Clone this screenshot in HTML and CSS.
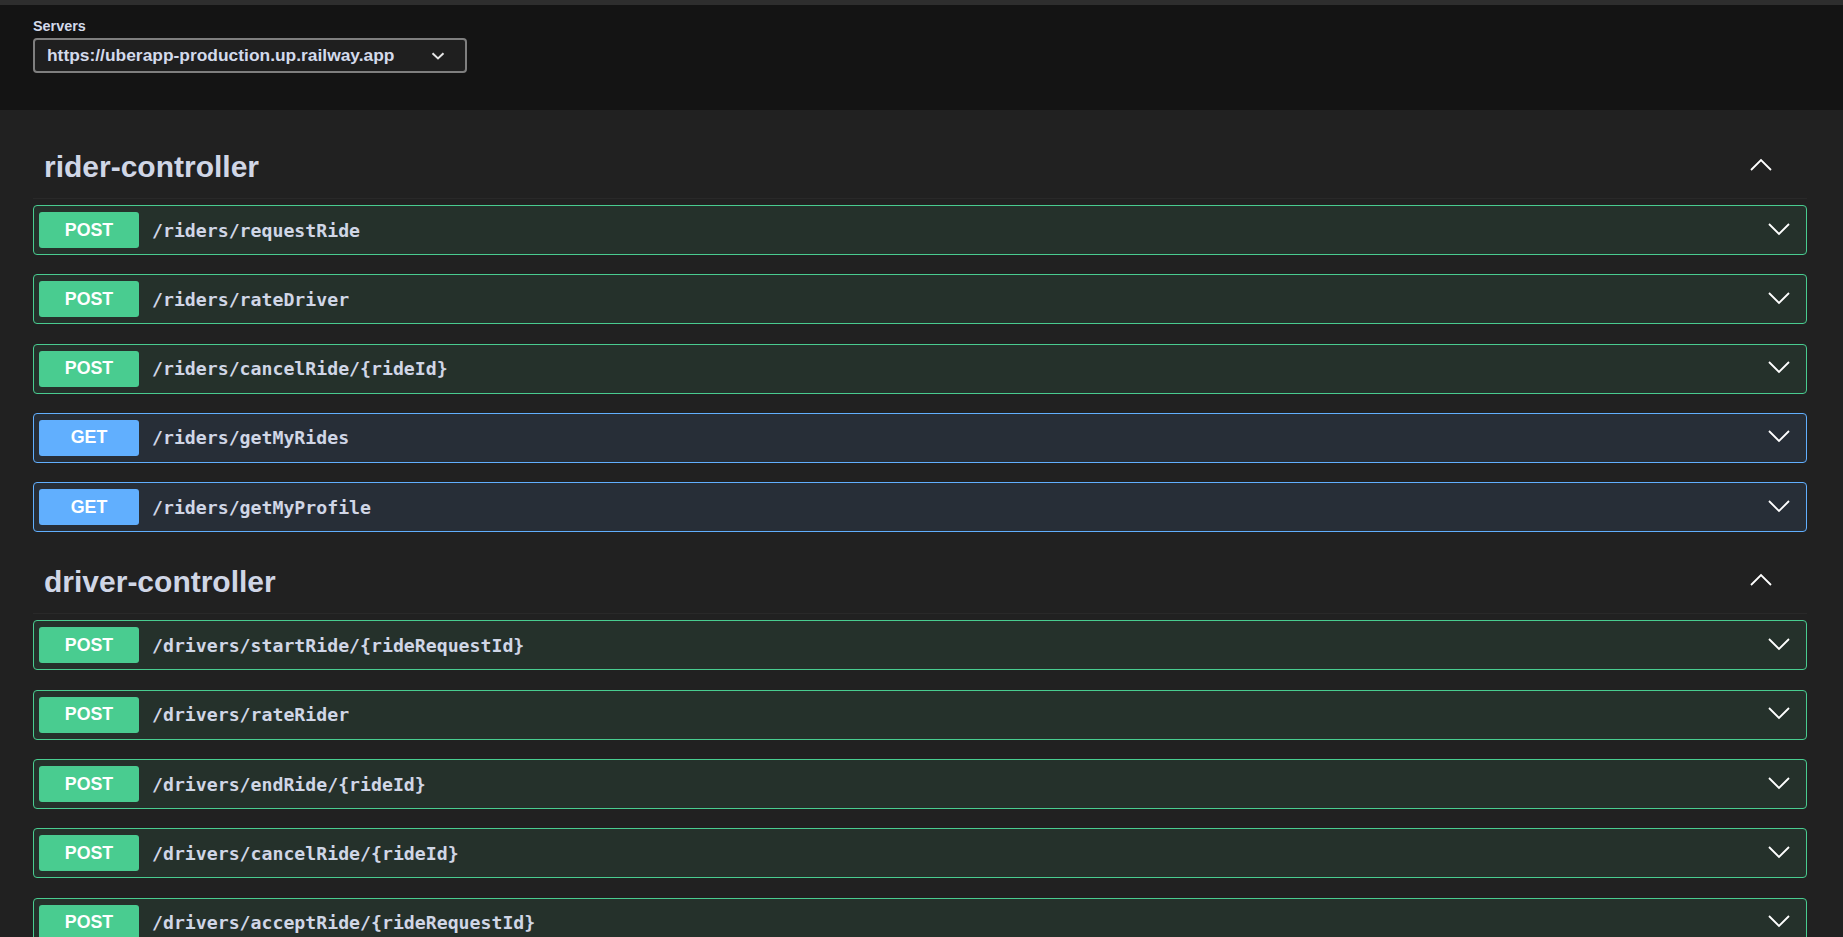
FILE: index.html
```html
<!DOCTYPE html>
<html lang="en">
<head>
<meta charset="utf-8">
<title>Swagger UI</title>
<link rel="stylesheet" href="styles.css">
</head>
<body>
<div class="topbar"></div>
<div class="scheme">
  <div class="servers">
    <label class="servers-label">Servers</label>
    <div class="select">
      <span class="select-text">https://uberapp-production.up.railway.app</span>
      <svg class="select-arrow" width="14" height="8" viewBox="0 0 14 8"><polyline points="1.5,1.2 7,6.4 12.5,1.2" fill="none" stroke="#e6e6e6" stroke-width="2"/></svg>
    </div>
  </div>
</div>
<main class="main">
  <section class="tag-section">
    <div class="tag-header">
      <h3 class="tag-title">rider-controller</h3>
      <svg class="tag-arrow" width="22" height="13" viewBox="0 0 22 13"><polyline points="1,12 11,2 21,12" fill="none" stroke="#ffffff" stroke-width="1.8"/></svg>
    </div>
    <div class="op post"><span class="method">POST</span><span class="path">/riders/requestRide</span><svg class="op-arrow" width="22" height="13" viewBox="0 0 22 13"><polyline points="1,1 11,11 21,1" fill="none" stroke="#ffffff" stroke-width="1.8"/></svg></div>
    <div class="op post"><span class="method">POST</span><span class="path">/riders/rateDriver</span><svg class="op-arrow" width="22" height="13" viewBox="0 0 22 13"><polyline points="1,1 11,11 21,1" fill="none" stroke="#ffffff" stroke-width="1.8"/></svg></div>
    <div class="op post"><span class="method">POST</span><span class="path">/riders/cancelRide/{rideId}</span><svg class="op-arrow" width="22" height="13" viewBox="0 0 22 13"><polyline points="1,1 11,11 21,1" fill="none" stroke="#ffffff" stroke-width="1.8"/></svg></div>
    <div class="op get"><span class="method">GET</span><span class="path">/riders/getMyRides</span><svg class="op-arrow" width="22" height="13" viewBox="0 0 22 13"><polyline points="1,1 11,11 21,1" fill="none" stroke="#ffffff" stroke-width="1.8"/></svg></div>
    <div class="op get"><span class="method">GET</span><span class="path">/riders/getMyProfile</span><svg class="op-arrow" width="22" height="13" viewBox="0 0 22 13"><polyline points="1,1 11,11 21,1" fill="none" stroke="#ffffff" stroke-width="1.8"/></svg></div>
  </section>
  <section class="tag-section">
    <div class="tag-header">
      <h3 class="tag-title">driver-controller</h3>
      <svg class="tag-arrow" width="22" height="13" viewBox="0 0 22 13"><polyline points="1,12 11,2 21,12" fill="none" stroke="#ffffff" stroke-width="1.8"/></svg>
    </div>
    <div class="op post"><span class="method">POST</span><span class="path">/drivers/startRide/{rideRequestId}</span><svg class="op-arrow" width="22" height="13" viewBox="0 0 22 13"><polyline points="1,1 11,11 21,1" fill="none" stroke="#ffffff" stroke-width="1.8"/></svg></div>
    <div class="op post"><span class="method">POST</span><span class="path">/drivers/rateRider</span><svg class="op-arrow" width="22" height="13" viewBox="0 0 22 13"><polyline points="1,1 11,11 21,1" fill="none" stroke="#ffffff" stroke-width="1.8"/></svg></div>
    <div class="op post"><span class="method">POST</span><span class="path">/drivers/endRide/{rideId}</span><svg class="op-arrow" width="22" height="13" viewBox="0 0 22 13"><polyline points="1,1 11,11 21,1" fill="none" stroke="#ffffff" stroke-width="1.8"/></svg></div>
    <div class="op post"><span class="method">POST</span><span class="path">/drivers/cancelRide/{rideId}</span><svg class="op-arrow" width="22" height="13" viewBox="0 0 22 13"><polyline points="1,1 11,11 21,1" fill="none" stroke="#ffffff" stroke-width="1.8"/></svg></div>
    <div class="op post"><span class="method">POST</span><span class="path">/drivers/acceptRide/{rideRequestId}</span><svg class="op-arrow" width="22" height="13" viewBox="0 0 22 13"><polyline points="1,1 11,11 21,1" fill="none" stroke="#ffffff" stroke-width="1.8"/></svg></div>
  </section>
</main>
</body>
</html>
```
FILE: styles.css
```css
html, body {
  margin: 0;
  padding: 0;
  overflow: hidden;
}
body {
  background: #212121;
  font-family: "Liberation Sans", Arial, sans-serif;
  color: #d0d6e6;
}
.topbar {
  height: 5px;
  background: #2e2e2e;
}
.scheme {
  height: 105px;
  background: #141414;
  box-sizing: border-box;
  padding: 12px 0 0 33px;
}
.servers {
  display: flex;
  flex-direction: column;
  align-items: flex-start;
}
.servers-label {
  font-size: 14.4px;
  font-weight: 700;
  line-height: 18px;
  color: #d3daeb;
  margin-bottom: 3px;
}
.select {
  box-sizing: border-box;
  width: 434px;
  height: 35px;
  border: 2px solid #7f7f7f;
  border-radius: 4px;
  background: #1f1f1f;
  display: flex;
  align-items: center;
  padding: 0 20px 0 12px;
}
.select-text {
  flex: 1;
  font-size: 17.4px;
  font-weight: 700;
  color: #d3daeb;
  white-space: nowrap;
}
.select-arrow {
  display: block;
}
.main {
  padding: 26px 36px 0 33px;
}
.tag-header {
  height: 62px;
  border-bottom: 1px solid #292929;
  margin-bottom: 6px;
  display: flex;
  align-items: center;
  padding: 0 35px 0 11px;
}
.tag-title {
  flex: 1;
  margin: 0;
  font-size: 30px;
  font-weight: 700;
  color: #d0d6e6;
  line-height: 36px;
}
.tag-arrow {
  display: block;
  margin-bottom: 5px;
}
.op {
  box-sizing: border-box;
  height: 50px;
  margin-bottom: 19.3px;
  border: 1px solid;
  border-radius: 4px;
  display: flex;
  align-items: center;
  padding: 0 16px 0 5px;
}
.op.post {
  border-color: #49cc90;
  background: #25312b;
}
.op.get {
  border-color: #61affe;
  background: #272e37;
}
.method {
  width: 100px;
  height: 36px;
  border-radius: 3px;
  display: flex;
  align-items: center;
  justify-content: center;
  color: #ffffff;
  font-size: 17.8px;
  font-weight: 700;
  box-sizing: border-box;
}
.post .method {
  background: #49cc90;
}
.get .method {
  background: #61affe;
}
.path {
  flex: 1;
  margin-left: 13px;
  font-family: "DejaVu Sans Mono", "Liberation Mono", monospace;
  font-weight: 700;
  font-size: 18.2px;
  color: #d0d6e6;
}
.op-arrow {
  display: block;
  margin-bottom: 2px;
}
```
